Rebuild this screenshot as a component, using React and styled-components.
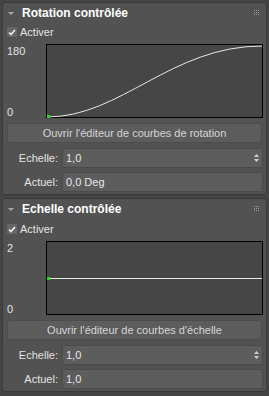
import React from "react"
import styled, { createGlobalStyle } from "styled-components"

const Global = createGlobalStyle`
  html, body { margin: 0; padding: 0; background: #444444; }
  body { font-family: "Liberation Sans", Arial, sans-serif; font-size: 11px; color: #dcdcdc; }
`

const Page = styled.div`
  width: 269px;
  height: 396px;
  box-sizing: border-box;
  padding: 2px 2px 0 2px;
  display: flex;
  flex-direction: column;
  gap: 3px;
`

const Panel = styled.div`
  box-sizing: border-box;
  height: ${p => p.h}px;
  border: 1px solid #3a3a3a;
  border-radius: 3px;
  background: #525252;
  padding: 0 3px 0 4px;
  display: flex;
  flex-direction: column;
`

const Header = styled.div`
  height: 19px;
  display: flex;
  align-items: center;
  gap: 8px;
  padding-left: 1px;
  margin-bottom: ${p => p.mb}px;
`

const Title = styled.div`
  flex: 1;
  font-size: 12px;
  font-weight: bold;
  color: #ffffff;
`

const Arrow = styled.div`
  width: 0;
  height: 0;
  border-left: 3px solid transparent;
  border-right: 3px solid transparent;
  border-top: 3px solid #a8a8a8;
  margin-top: 1px;
`

const Grip = styled.svg`
  width: 5px;
  height: 5px;
  margin-right: 4px;
`

const CheckRow = styled.label`
  height: 14px;
  display: flex;
  align-items: center;
  gap: 3px;
  color: #e4e4e4;
`

const Box = styled.span`
  width: 10px;
  height: 10px;
  background: #666666;
  display: flex;
  align-items: center;
  justify-content: center;
`

const GraphRow = styled.div`
  margin-top: 5px;
  height: 74px;
  display: flex;
`

const Scale = styled.div`
  width: 39px;
  display: flex;
  flex-direction: column;
  justify-content: space-between;
  color: #e4e4e4;
  padding: 1px 0 0 0;
  line-height: 12px;
`

const Graph = styled.svg`
  flex: 1;
  height: 74px;
  display: block;
`

const Button = styled.div`
  margin-top: 5px;
  height: 20px;
  box-sizing: border-box;
  border-radius: 3px;
  background: #5c5c5c;
  border: 1px solid #4c4c4c;
  display: flex;
  align-items: center;
  justify-content: center;
  color: #d6d6d6;
  margin-right: 1px;
`

const Field = styled.div`
  margin-top: ${p => p.mt}px;
  height: 20px;
  display: flex;
  align-items: center;
`

const Label = styled.div`
  width: 51px;
  text-align: right;
  color: #e4e4e4;
  padding-right: 4px;
`

const Input = styled.div`
  flex: 1;
  height: 20px;
  box-sizing: border-box;
  background: #5d5d5d;
  border: 1px solid #4a4a4a;
  padding-left: 3px;
  display: flex;
  align-items: center;
  justify-content: space-between;
  color: #e8e8e8;
`

const Spin = styled.svg`
  width: 5px;
  height: 8px;
  margin-right: 3px;
`

const Dots = () => (
  <Grip viewBox="0 0 5 5">
    {[0, 2, 4].map(y => [0, 2, 4].map(x => <rect key={x + "-" + y} x={x} y={y} width="1" height="1" fill="#a0a0a0" />))}
  </Grip>
)

const Check = () => (
  <Box>
    <svg width="8" height="7" viewBox="0 0 8 7">
      <path d="M1 3.5 L3 5.5 L7 1" stroke="#f0f0f0" strokeWidth="1.6" fill="none" />
    </svg>
  </Box>
)

const Spinner = () => (
  <Spin viewBox="0 0 5 8">
    <path d="M0 3 L2.5 0 L5 3 Z M0 5 L2.5 8 L5 5 Z" fill="#d0d0d0" />
  </Spin>
)

const Curve = ({ flat }) => (
  <Graph viewBox="0 0 217 74" preserveAspectRatio="none">
    <rect x="0.5" y="0.5" width="216" height="73" fill="#464646" stroke="#000" />
    {flat ? (
      <path d="M1 37.5 L216 37.5" stroke="#e8e8e8" strokeWidth="1" fill="none" />
    ) : (
      <path d="M1 73 C 75 73, 125 2, 216 2" stroke="#e8e8e8" strokeWidth="1" fill="none" />
    )}
    <rect x="1" y={flat ? 36 : 71} width="3" height="3" fill="#22e020" />
  </Graph>
)

const Section = ({ title, top, bottom, flat, button, scale, actual, h, mb }) => (
  <Panel h={h}>
    <Header mb={mb}>
      <Arrow />
      <Title>{title}</Title>
      <Dots />
    </Header>
    <CheckRow>
      <Check />
      Activer
    </CheckRow>
    <GraphRow>
      <Scale>
        <span>{top}</span>
        <span>{bottom}</span>
      </Scale>
      <Curve flat={flat} />
    </GraphRow>
    <Button>{button}</Button>
    <Field mt={5}>
      <Label>Echelle:</Label>
      <Input>
        <span>{scale}</span>
        <Spinner />
      </Input>
    </Field>
    <Field mt={4}>
      <Label>Actuel:</Label>
      <Input>{actual}</Input>
    </Field>
  </Panel>
)

export default function App() {
  return (
    <>
      <Global />
      <Page>
        <Section
          h={193}
          mb={3}
          title="Rotation contrôlée"
          top="180"
          bottom="0"
          button="Ouvrir l'éditeur de courbes de rotation"
          scale="1,0"
          actual="0,0 Deg"
        />
        <Section
          h={194}
          mb={4}
          flat
          title="Echelle contrôlée"
          top="2"
          bottom="0"
          button="Ouvrir l'éditeur de courbes d'échelle"
          scale="1,0"
          actual="1,0"
        />
      </Page>
    </>
  )
}
